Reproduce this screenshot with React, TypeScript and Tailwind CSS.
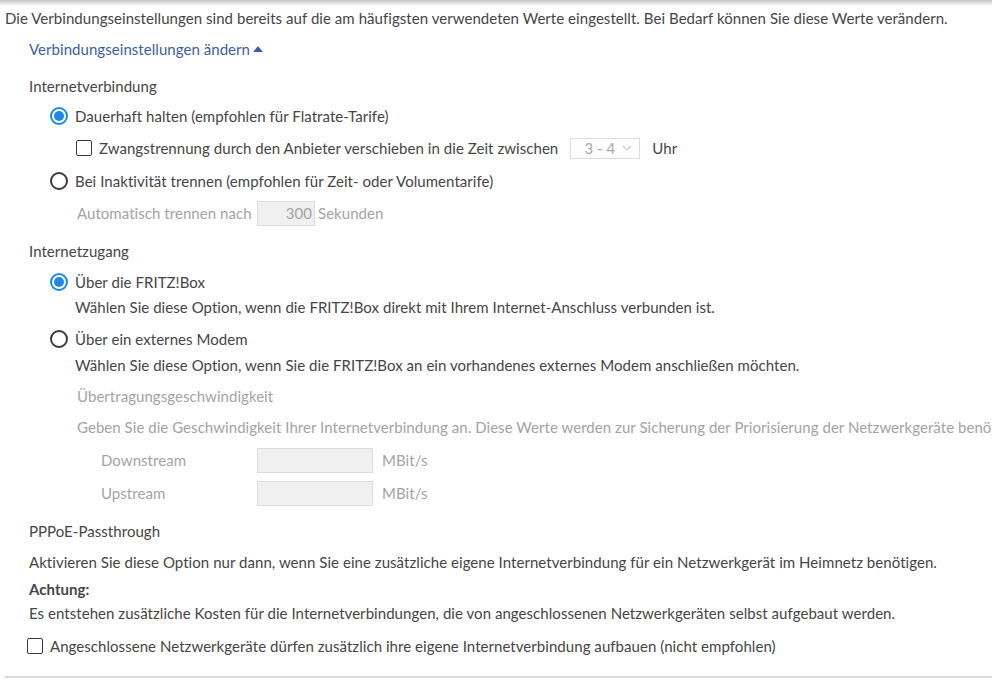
import React from "react";

const Radio = ({ checked }: { checked?: boolean }) =>
  checked ? (
    <span className="flex h-[18px] w-[18px] shrink-0 items-center justify-center rounded-full border-2 border-[#1e88e5] bg-white">
      <span className="h-[10px] w-[10px] rounded-full bg-[#1e88e5]" />
    </span>
  ) : (
    <span className="h-[18px] w-[18px] shrink-0 rounded-full border-2 border-[#3a3a3a] bg-white" />
  );

const Checkbox = () => (
  <span className="h-[16px] w-[16px] shrink-0 rounded-[2px] border-[1.5px] border-[#3a3a3a] bg-white" />
);

export default function App() {
  return (
    <div
      className="w-[992px] h-[682px] overflow-hidden bg-white text-[15px] tracking-[0.05px] text-[#454545]"
      style={{ fontFamily: "Lato, 'Noto Sans', sans-serif" }}
    >
      <div className="h-[6px] bg-gradient-to-b from-[#c4c4c4] to-white" />
      <div className="flex h-[24px] items-center pl-[5px] whitespace-nowrap">
        Die Verbindungseinstellungen sind bereits auf die am häufigsten verwendeten Werte eingestellt. Bei Bedarf können Sie diese Werte verändern.
      </div>
      <div className="mt-[7px] flex h-[24px] items-center pl-[29px] text-[#3d5e9e]">
        Verbindungseinstellungen ändern
        <span className="ml-[3px] inline-block h-0 w-0 border-x-[5px] border-b-[6px] border-x-transparent border-b-[#3d5e9e]" />
      </div>
      <div className="mt-[13px] flex h-[24px] items-center pl-[29px]">Internetverbindung</div>
      <div className="mt-[6px] flex h-[24px] items-center gap-[7px] pl-[50px]">
        <Radio checked />
        <span>Dauerhaft halten (empfohlen für Flatrate-Tarife)</span>
      </div>
      <div className="mt-[8px] flex h-[24px] items-center pl-[76px] whitespace-nowrap">
        <Checkbox />
        <span className="ml-[7px]">Zwangstrennung durch den Anbieter verschieben in die Zeit zwischen</span>
        <span className="ml-[12px] flex h-[21px] w-[70px] items-center justify-end border border-[#dcdcdc] pr-[7px] text-[#a8a8a8]">
          <span>3 - 4</span>
          <svg className="ml-[7px]" width="10" height="6" viewBox="0 0 10 6" fill="none">
            <path d="M1 1l4 4 4-4" stroke="#c8c8c8" strokeWidth="1.2" />
          </svg>
        </span>
        <span className="ml-[12px]">Uhr</span>
      </div>
      <div className="mt-[9px] flex h-[24px] items-center gap-[7px] pl-[50px]">
        <Radio />
        <span>Bei Inaktivität trennen (empfohlen für Zeit- oder Volumentarife)</span>
      </div>
      <div className="mt-[7px] flex h-[26px] items-center pl-[77px] text-[#a3a3a3]">
        <span className="w-[180px]">Automatisch trennen nach</span>
        <span className="flex h-[25px] w-[58px] items-center justify-end border border-[#dcdcdc] bg-[#f0f0f0] pr-[2px]">300</span>
        <span className="ml-[3px]">Sekunden</span>
      </div>
      <div className="mt-[13px] flex h-[24px] items-center pl-[29px]">Internetzugang</div>
      <div className="mt-[7px] flex h-[24px] items-center gap-[7px] pl-[50px]">
        <Radio checked />
        <span>Über die FRITZ!Box</span>
      </div>
      <div className="mt-[1px] flex h-[24px] items-center pl-[75px]">
        Wählen Sie diese Option, wenn die FRITZ!Box direkt mit Ihrem Internet-Anschluss verbunden ist.
      </div>
      <div className="mt-[8px] flex h-[24px] items-center gap-[7px] pl-[50px]">
        <Radio />
        <span>Über ein externes Modem</span>
      </div>
      <div className="mt-[2px] flex h-[24px] items-center pl-[75px]">
        Wählen Sie diese Option, wenn Sie die FRITZ!Box an ein vorhandenes externes Modem anschließen möchten.
      </div>
      <div className="mt-[7px] flex h-[24px] items-center pl-[77px] text-[#a3a3a3]">Übertragungsgeschwindigkeit</div>
      <div className="mt-[7px] flex h-[24px] items-center pl-[77px] text-[#a3a3a3] whitespace-nowrap">
        Geben Sie die Geschwindigkeit Ihrer Internetverbindung an. Diese Werte werden zur Sicherung der Priorisierung der Netzwerkgeräte benötigt.
      </div>
      <div className="mt-[8px] flex h-[26px] items-center pl-[101px] text-[#a3a3a3]">
        <span className="w-[156px]">Downstream</span>
        <span className="h-[25px] w-[116px] border border-[#dcdcdc] bg-[#f0f0f0]" />
        <span className="ml-[9px]">MBit/s</span>
      </div>
      <div className="mt-[7px] flex h-[26px] items-center pl-[101px] text-[#a3a3a3]">
        <span className="w-[156px]">Upstream</span>
        <span className="h-[25px] w-[116px] border border-[#dcdcdc] bg-[#f0f0f0]" />
        <span className="ml-[9px]">MBit/s</span>
      </div>
      <div className="mt-[13px] flex h-[24px] items-center pl-[29px]">PPPoE-Passthrough</div>
      <div className="mt-[7px] flex h-[24px] items-center pl-[29px]">
        Aktivieren Sie diese Option nur dann, wenn Sie eine zusätzliche eigene Internetverbindung für ein Netzwerkgerät im Heimnetz benötigen.
      </div>
      <div className="mt-[3px] flex h-[24px] items-center pl-[29px] font-bold">Achtung:</div>
      <div className="flex h-[24px] items-center pl-[29px]">
        Es entstehen zusätzliche Kosten für die Internetverbindungen, die von angeschlossenen Netzwerkgeräten selbst aufgebaut werden.
      </div>
      <div className="mt-[9px] flex h-[24px] items-center pl-[27px]">
        <Checkbox />
        <span className="ml-[7px]">Angeschlossene Netzwerkgeräte dürfen zusätzlich ihre eigene Internetverbindung aufbauen (nicht empfohlen)</span>
      </div>
      <div className="ml-[5px] mt-[18px] border-t-2 border-[#d8d8d8]" />
    </div>
  );
}
